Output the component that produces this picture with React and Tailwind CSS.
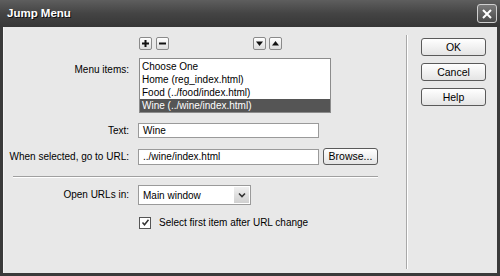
import React from "react";

const ITEMS = [
  "Choose One",
  "Home (reg_index.html)",
  "Food (../food/index.html)",
  "Wine (../wine/index.html)",
];

function SmallBtn({ children }) {
  return (
    <button className="w-[13px] h-[13px] flex items-center justify-center border border-[#8a8a8a] rounded-[2px] bg-gradient-to-b from-white to-[#dcdcdc]">
      {children}
    </button>
  );
}

function DlgButton({ children }) {
  return (
    <button className="w-[65px] h-[18px] border border-[#5a5a5a] rounded-[3px] bg-gradient-to-b from-white to-[#e4e4e4] text-[10.5px] text-black leading-none flex items-center justify-center">
      {children}
    </button>
  );
}

export default function App() {
  return (
    <div
      className="w-[500px] h-[276px] bg-[#3a3a3a] flex flex-col overflow-hidden"
      style={{ fontFamily: '"Liberation Sans", Arial, sans-serif' }}
    >
      {/* Title bar */}
      <div className="h-[27px] shrink-0 flex items-center justify-between pl-[7px] pr-[3px] bg-gradient-to-b from-[#5e5e5e] via-[#444444] to-[#363636]">
        <span className="text-white font-bold text-[11.5px] [text-shadow:1px_1px_0_#111]">Jump Menu</span>
        <button className="w-[20px] h-[19px] border border-[#cfcfcf] rounded-[3px] bg-gradient-to-b from-[#7a7a7a] to-[#4a4a4a] flex items-center justify-center">
          <svg width="12" height="12" viewBox="0 0 12 12">
            <path d="M2 2 L10 10 M10 2 L2 10" stroke="white" strokeWidth="2" />
          </svg>
        </button>
      </div>

      {/* Body */}
      <div className="flex-1 mx-[3px] mb-[3px] bg-[#e8e8e8] border-l border-[#f4f4f4] flex text-[10px] text-black">
        {/* Left panel */}
        <div className="w-[402px] pl-[9px] pt-[10px] pr-[25px] flex flex-col">
          <div className="grid grid-cols-[116px_1fr] gap-x-[9px]">
            {/* arrow row */}
            <div />
            <div className="flex h-[13px] items-center">
              <div className="ml-[1px] flex gap-[4px]">
                <SmallBtn>
                  <svg width="9" height="9" viewBox="0 0 9 9">
                    <path d="M4.5 1 V8 M1 4.5 H8" stroke="#111" strokeWidth="2" />
                  </svg>
                </SmallBtn>
                <SmallBtn>
                  <svg width="9" height="9" viewBox="0 0 9 9">
                    <path d="M1 4.5 H8" stroke="#111" strokeWidth="2" />
                  </svg>
                </SmallBtn>
              </div>
              <div className="ml-[84px] flex gap-[3px]">
                <SmallBtn>
                  <svg width="9" height="9" viewBox="0 0 9 9">
                    <path d="M1 2.5 H8 L4.5 7 Z" fill="#111" />
                  </svg>
                </SmallBtn>
                <SmallBtn>
                  <svg width="9" height="9" viewBox="0 0 9 9">
                    <path d="M1 6.5 H8 L4.5 2 Z" fill="#111" />
                  </svg>
                </SmallBtn>
              </div>
            </div>

            {/* Menu items */}
            <div className="text-right pt-[4px] mt-[8px]">Menu items:</div>
            <div className="mt-[8px] ml-[1px] w-[192px] h-[55px] bg-white border border-[#8c8c8c] pt-[1px]">
              {ITEMS.map((it, i) => (
                <div
                  key={it}
                  className={`h-[13px] leading-[13px] pl-[2px] ${
                    i === 3 ? "bg-[#555555] text-white" : ""
                  }`}
                >
                  {it}
                </div>
              ))}
            </div>

            {/* Text */}
            <div className="text-right mt-[10px] h-[15px] leading-[15px]">Text:</div>
            <div className="mt-[10px]">
              <div className="w-[181px] h-[15px] bg-white border border-[#9a9a9a] leading-[13px] pl-[4px]">Wine</div>
            </div>

            {/* URL */}
            <div className="text-right whitespace-nowrap mt-[10px] h-[17px] leading-[17px] flex justify-end">
              <span>When selected, go to URL:</span>
            </div>
            <div className="mt-[10px] flex items-center gap-[4px]">
              <div className="w-[181px] h-[16px] bg-white border border-[#9a9a9a] leading-[14px] pl-[4px]">../wine/index.html</div>
              <button className="w-[55px] h-[17px] border border-[#5a5a5a] rounded-[3px] bg-gradient-to-b from-white to-[#e4e4e4] text-[10.5px] leading-none">
                Browse...
              </button>
            </div>
          </div>

          {/* Separator */}
          <div className="mt-[11px] w-[365px] h-[2px] border-t border-[#a0a0a0] border-b border-b-white" />

          <div className="grid grid-cols-[116px_1fr] gap-x-[9px] mt-[7px]">
            <div className="text-right h-[20px] leading-[20px]">Open URLs in:</div>
            <div className="w-[113px] h-[20px] bg-white border border-[#9a9a9a] flex items-center justify-between">
              <span className="pl-[4px]">Main window</span>
              <span className="w-[15px] h-[16px] mr-[1px] bg-gradient-to-b from-[#f0f0f0] to-[#d0d0d0] flex items-center justify-center">
                <svg width="8" height="6" viewBox="0 0 8 6">
                  <path d="M1 1.5 L4 4.5 L7 1.5" stroke="#333" strokeWidth="1.6" fill="none" />
                </svg>
              </span>
            </div>

            <div />
            <div className="mt-[10px] flex items-center gap-[8px]">
              <span className="ml-[1px] w-[12px] h-[12px] bg-white border border-[#555] flex items-center justify-center">
                <svg width="9" height="9" viewBox="0 0 9 9">
                  <path d="M1.5 4.5 L3.5 6.8 L7.5 1.8" stroke="#333" strokeWidth="1.5" fill="none" />
                </svg>
              </span>
              <span>Select first item after URL change</span>
            </div>
          </div>
        </div>

        {/* Divider */}
        <div className="mt-[8px] mb-[4px] w-[2px] border-l border-[#a8a8a8] border-r border-r-white" />

        {/* Buttons */}
        <div className="pl-[13px] pt-[11px] flex flex-col gap-[7px]">
          <DlgButton>OK</DlgButton>
          <DlgButton>Cancel</DlgButton>
          <DlgButton>Help</DlgButton>
        </div>
      </div>
    </div>
  );
}
